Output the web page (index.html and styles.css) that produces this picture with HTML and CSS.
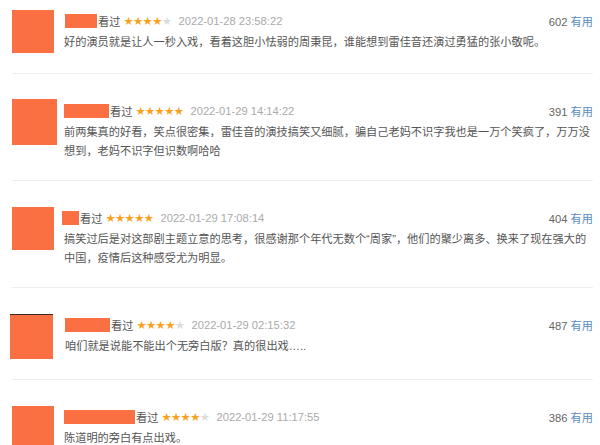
FILE: index.html
```html
<!doctype html>
<html lang="zh-CN">
<head>
    <meta charset="utf-8"/>
    <title>短评</title>
    <link rel="stylesheet" href="styles.css">
</head>
<body>

<!--评论列表-->
<div class="list">
    <div class="comment">
        <div class="avatar"></div>
        <div class="body">
            <div class="head">
                <span class="name w32"></span>
                <span class="seen">看过</span>
                <span class="stars">★★★★<i>★</i></span>
                <span class="date">2022-01-28 23:58:22</span>
                <span class="votes">602 <em>有用</em></span>
            </div>
            <p class="text">好的演员就是让人一秒入戏，看着这胆小怯弱的周秉昆，谁能想到雷佳音还演过勇猛的张小敬呢。</p>
        </div>
    </div>
    <div class="comment">
        <div class="avatar big"></div>
        <div class="body">
            <div class="head">
                <span class="name w45"></span>
                <span class="seen">看过</span>
                <span class="stars">★★★★★</span>
                <span class="date">2022-01-29 14:14:22</span>
                <span class="votes">391 <em>有用</em></span>
            </div>
            <p class="text">前两集真的好看，笑点很密集，雷佳音的演技搞笑又细腻，骗自己老妈不识字我也是一万个笑疯了，万万没想到，老妈不识字但识数啊哈哈</p>
        </div>
    </div>
    <div class="comment">
        <div class="avatar"></div>
        <div class="body">
            <div class="head">
                <span class="name w17"></span>
                <span class="seen">看过</span>
                <span class="stars">★★★★★</span>
                <span class="date">2022-01-29 17:08:14</span>
                <span class="votes">404 <em>有用</em></span>
            </div>
            <p class="text">搞笑过后是对这部剧主题立意的思考，很感谢那个年代无数个“周家”，他们的聚少离多、换来了现在强大的中国，疫情后这种感受尤为明显。</p>
        </div>
    </div>
    <div class="comment">
        <div class="avatar edge"></div>
        <div class="body">
            <div class="head">
                <span class="name w45"></span>
                <span class="seen">看过</span>
                <span class="stars">★★★★<i>★</i></span>
                <span class="date">2022-01-29 02:15:32</span>
                <span class="votes">487 <em>有用</em></span>
            </div>
            <p class="text">咱们就是说能不能出个无旁白版？真的很出戏…..</p>
        </div>
    </div>
    <div class="comment">
        <div class="avatar"></div>
        <div class="body">
            <div class="head">
                <span class="name w71"></span>
                <span class="seen">看过</span>
                <span class="stars">★★★★<i>★</i></span>
                <span class="date">2022-01-29 11:17:55</span>
                <span class="votes">386 <em>有用</em></span>
            </div>
            <p class="text">陈道明的旁白有点出戏。</p>
        </div>
    </div>
</div>

</body>
</html>
```

FILE: styles.css
```css
* {
    padding: 0;
    margin: 0;
}
body {
    background: #fff;
    font-family: "Liberation Sans", "Noto Sans CJK SC", sans-serif;
    font-size: 11.2px;
    color: #555;
}
.list {
    margin: 0 7px 0 12px;
}
.comment {
    display: flex;
    gap: 10px;
    padding: 25px 0 20px;
    border-bottom: 1px solid #eee;
}
.comment:first-child {
    padding-top: 9px;
}
.avatar {
    flex: none;
    width: 42px;
    height: 43px;
    margin-top: 1px;
    background: #fa7043;
}
.avatar.big {
    width: 45px;
    height: 46px;
    margin-top: 0;
    margin-right: -3px;
}
.avatar.edge {
    width: 43px;
    height: 44px;
    margin-left: -2px;
    margin-right: 2px;
    border-top: 1px solid #3a2a24;
}
.body {
    flex: 1;
    min-width: 0;
    padding-top: 2px;
}
.head {
    display: flex;
    align-items: center;
    height: 20px;
}
.name {
    display: inline-block;
    height: 14px;
    background: #fa7043;
}
.w17 { width: 17px; margin-left: -2px; }
.w32 { width: 32px; margin-left: 1px; }
.w45 { width: 45px; }
.w71 { width: 71px; }
.seen {
    margin-left: 1px;
    color: #555;
}
.stars {
    margin-left: 3px;
    font-family: "DejaVu Sans", sans-serif;
    font-size: 11.4px;
    color: #f9a11b;
    letter-spacing: -0.6px;
}
.stars i {
    font-style: normal;
    color: #dcdcdc;
}
.date {
    margin-left: 7px;
    color: #aaa;
}
.votes {
    margin-left: auto;
    color: #666;
}
.votes em {
    font-style: normal;
    color: #5a8cbc;
}
.text {
    margin-top: 2px;
    line-height: 18.5px;
    color: #555;
}
```
